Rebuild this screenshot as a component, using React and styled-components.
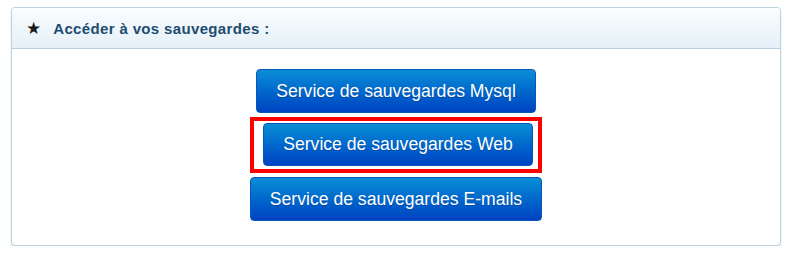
import styled, { createGlobalStyle } from "styled-components";

const GlobalStyle = createGlobalStyle`
  html, body {
    margin: 0;
    padding: 0;
    background: #ffffff;
  }
  body {
    font-family: "Liberation Sans", Arial, sans-serif;
  }
`;

const Page = styled.div`
  padding: 7px 11px 0 11px;
  width: 792px;
  box-sizing: border-box;
`;

const Panel = styled.section`
  border: 1px solid #bcd2de;
  border-radius: 4px;
  background: #ffffff;
  box-shadow: 0 1px 2px rgba(120, 150, 170, 0.25);
  overflow: hidden;
`;

const PanelHeader = styled.header`
  display: flex;
  align-items: center;
  gap: 12px;
  height: 40px;
  padding: 0 14px;
  background: linear-gradient(to bottom, #fbfdfe 0%, #e4f0f7 100%);
  border-bottom: 1px solid #b7cfdc;
`;

const Star = styled.span`
  font-size: 17px;
  color: #1a1a1a;
  line-height: 1;
  font-family: "DejaVu Sans", sans-serif;
`;

const Title = styled.h2`
  margin: 0;
  font-size: 15px;
  font-weight: bold;
  color: #1d4c71;
  letter-spacing: 0.35px;
  font-family: "Liberation Sans", Arial, sans-serif;
`;

const PanelBody = styled.div`
  display: flex;
  flex-direction: column;
  align-items: center;
  gap: 4px;
  padding: 20px 0 24px;
`;

const Highlight = styled.div`
  border: 4px solid #ff0000;
  padding: 2px 5px 3px 9px;
  display: flex;
`;

const ActionButton = styled.button`
  height: ${({ $h }) => $h || 44}px;
  padding: 0 19px;
  border: 1px solid #0a56b8;
  border-radius: 4px;
  background: linear-gradient(to bottom, #0a8ed6 0%, #0068cc 50%, #0043c2 100%);
  color: #ffffff;
  font-family: "Liberation Sans", Arial, sans-serif;
  font-size: 17.6px;
  text-shadow: 0 1px 1px rgba(0, 0, 0, 0.2);
  cursor: pointer;
`;

export default function App() {
  return (
    <>
      <GlobalStyle />
      <Page>
        <Panel>
          <PanelHeader>
            <Star>★</Star>
            <Title>Accéder à vos sauvegardes :</Title>
          </PanelHeader>
          <PanelBody>
            <ActionButton>Service de sauvegardes Mysql</ActionButton>
            <Highlight>
              <ActionButton $h={43}>Service de sauvegardes Web</ActionButton>
            </Highlight>
            <ActionButton>Service de sauvegardes E-mails</ActionButton>
          </PanelBody>
        </Panel>
      </Page>
    </>
  );
}
